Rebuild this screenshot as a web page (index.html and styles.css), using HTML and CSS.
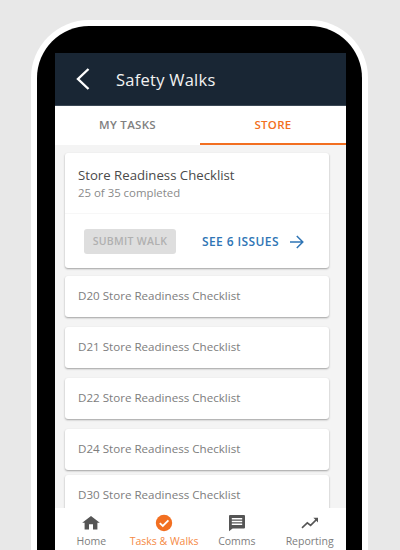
FILE: index.html
```html
<!DOCTYPE html>
<html lang="en">
<head>
    <meta charset="UTF-8">
    <title>Safety Walks</title>
    <link rel="stylesheet" href="styles.css">
</head>
<body>
    <div class="phone">
        <div class="screen">
            <div class="app-bar">
                <svg class="back-icon" width="16" height="24" viewBox="0 0 16 24"><path d="M13.5 2 L3 12 L13.5 22" fill="none" stroke="#fff" stroke-width="2.4"/></svg>
                <span class="app-title">Safety Walks</span>
            </div>
            <div class="tabs">
                <div class="tab">MY TASKS</div>
                <div class="tab active">STORE</div>
            </div>
            <div class="content">
                <div class="card summary">
                    <div class="summary-top">
                        <div class="summary-title">Store Readiness Checklist</div>
                        <div class="summary-sub">25 of 35 completed</div>
                    </div>
                    <div class="summary-actions">
                        <div class="submit-btn">SUBMIT WALK</div>
                        <div class="issues-link">
                            <span>SEE 6 ISSUES</span>
                            <svg width="15" height="14" viewBox="0 0 15 14"><path d="M1 7 H13.5 M7.8 1 L13.8 7 L7.8 13" fill="none" stroke="#2f75b5" stroke-width="1.5"/></svg>
                        </div>
                    </div>
                </div>
                <div class="card row">D20 Store Readiness Checklist</div>
                <div class="card row">D21 Store Readiness Checklist</div>
                <div class="card row">D22 Store Readiness Checklist</div>
                <div class="card row">D24 Store Readiness Checklist</div>
                <div class="card row">D30 Store Readiness Checklist</div>
            </div>
            <div class="bottom-nav">
                <div class="nav-item">
                    <svg width="20" height="20" viewBox="0 0 20 20"><path d="M8 16.5v-5.2h4v5.2h4.4v-6.7h2.4L10 3 1.2 9.8h2.4v6.7z" fill="#555"/></svg>
                    <span>Home</span>
                </div>
                <div class="nav-item active">
                    <svg width="20" height="20" viewBox="0 0 20 20"><circle cx="10" cy="10" r="8.2" fill="#f26f21"/><path d="M5.8 10.2 L8.8 13 L14.4 7.4" fill="none" stroke="#fff" stroke-width="1.8"/></svg>
                    <span>Tasks &amp; Walks</span>
                </div>
                <div class="nav-item">
                    <svg width="20" height="20" viewBox="0 0 20 20"><path d="M3 2h14a1 1 0 0 1 1 1v11.5a1 1 0 0 1-1 1H5.6L2 18.2V3a1 1 0 0 1 1-1z" fill="#555"/><path d="M4.8 5h10.4v1.4H4.8zM4.8 7.8h10.4v1.4H4.8zM4.8 10.6h10.4V12H4.8z" fill="#fff"/></svg>
                    <span>Comms</span>
                </div>
                <div class="nav-item">
                    <svg width="20" height="20" viewBox="0 0 20 20"><path d="M2 14.8 L7.3 9.8 L10.6 12.4 L16.4 6.6" fill="none" stroke="#555" stroke-width="1.6"/><path d="M13.4 4.8 H18 V9.4z" fill="#555"/></svg>
                    <span>Reporting</span>
                </div>
            </div>
        </div>
    </div>
</body>
</html>
```

FILE: styles.css
```css
:root {
    --page-grey: #e8e8e8;
    --navy: #192634;
    --orange: #f26f21;
    --blue: #2f75b5;
    --font-family: "Open Sans", sans-serif;
}

body {
    margin: 0;
    height: 550px;
    overflow: hidden;
    background-color: var(--page-grey);
    font-family: var(--font-family);
}

.phone {
    box-sizing: border-box;
    width: 337px;
    height: 530px;
    margin: 20px 0 0 31px;
    padding: 27px 16px 0 18px;
    background-color: #000;
    border: 6px solid #fff;
    border-bottom: none;
    border-radius: 58px 58px 0 0;
}

.screen {
    height: 497px;
    display: flex;
    flex-direction: column;
    overflow: hidden;
    background-color: #f4f4f4;
}

.app-bar {
    flex: none;
    height: 52px;
    display: flex;
    align-items: center;
    padding-left: 20px;
    background-color: var(--navy);
    border-bottom: 1px solid #3b4855;
}

.back-icon {
    flex: none;
}

.app-title {
    margin-left: 25px;
    font-size: 16.5px;
    font-weight: 500;
    letter-spacing: 0.25px;
    color: #f2f2f2;
}

.tabs {
    flex: none;
    height: 39px;
    display: flex;
    background-color: #fff;
}

.tab {
    flex: 0 0 145px;
    box-sizing: border-box;
    padding-top: 11px;
    text-align: center;
    font-size: 11.5px;
    font-weight: 600;
    letter-spacing: 0.3px;
    color: #808080;
}

.tab.active {
    flex-basis: 146px;
    color: var(--orange);
    border-bottom: 2px solid var(--orange);
}

.content {
    flex: 1;
    min-height: 0;
    overflow: hidden;
    padding: 8px 17px 0 10px;
}

.card {
    background-color: #fff;
    border-radius: 3px;
    box-shadow: 0 1px 2px rgba(0, 0, 0, 0.35);
}

.summary {
    height: 115px;
    margin-bottom: 8px;
}

.summary-top {
    box-sizing: border-box;
    height: 61px;
    padding: 13px 0 0 13px;
    border-bottom: 1px solid #f7f7f7;
}

.summary-title {
    font-size: 13.2px;
    line-height: 18px;
    color: #4a4a4a;
}

.summary-sub {
    font-size: 11.4px;
    line-height: 17px;
    color: #8a8a8a;
}

.summary-actions {
    display: flex;
    align-items: center;
    padding: 15px 0 0 19px;
}

.submit-btn {
    width: 92px;
    height: 25px;
    line-height: 25px;
    text-align: center;
    font-size: 10.5px;
    font-weight: 600;
    letter-spacing: 0.3px;
    color: #b0b0b0;
    background-color: #dedede;
    border-radius: 3px;
}

.issues-link {
    display: flex;
    align-items: center;
    gap: 10px;
    margin-left: 26px;
    font-size: 12px;
    font-weight: 600;
    letter-spacing: 0.4px;
    color: var(--blue);
}

.row {
    height: 41px;
    line-height: 40px;
    margin-bottom: 10px;
    padding-left: 13px;
    font-size: 11.6px;
    color: #7d7d7d;
}

.row:nth-last-child(2) {
    margin-bottom: 5px;
}

.bottom-nav {
    flex: none;
    height: 42px;
    display: flex;
    background-color: #fff;
}

.nav-item {
    flex: 1;
    display: flex;
    flex-direction: column;
    align-items: center;
    padding-top: 5px;
    font-size: 10.5px;
    line-height: 14px;
    color: #7d7d7d;
}

.nav-item span {
    margin-top: 1px;
    white-space: nowrap;
}

.nav-item.active {
    color: #f58a45;
}
```
